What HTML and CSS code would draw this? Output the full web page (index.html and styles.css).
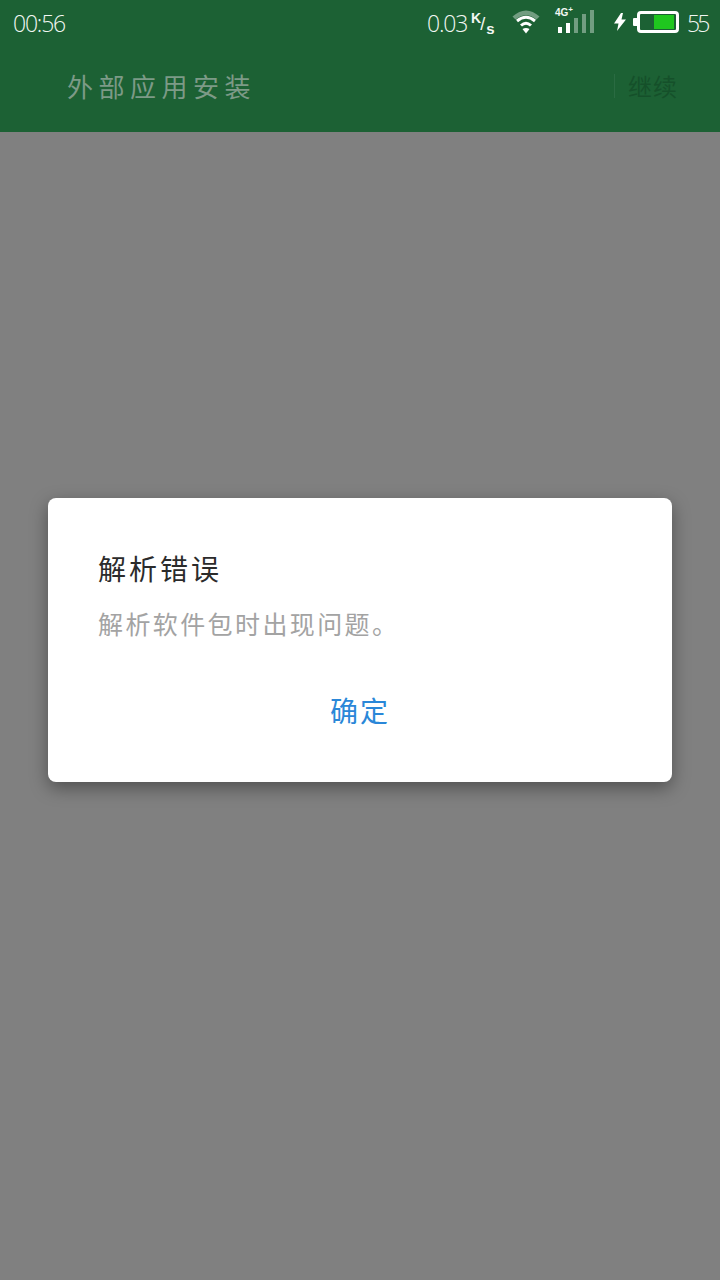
FILE: index.html
```html
<!DOCTYPE html>
<html lang="zh-CN">
<head>
<meta charset="utf-8">
<title>外部应用安装</title>
<link rel="stylesheet" href="styles.css">
</head>
<body>
<div class="screen">
  <header class="appbar">
    <div class="status">
      <span class="clock">00:56</span>
      <div class="status-right">
        <span class="speed">0.03</span>
        <span class="unit"><span class="unit-k">K</span><span class="unit-slash">/</span><span class="unit-s">s</span></span>
        <svg class="wifi" width="30" height="26" viewBox="0 0 30 26">
          <path d="M1.5 8.5 Q15 -3.5 28.500 8.500 L25.500 11.500 Q15 3 4.500 11.500Z" fill="#fff" fill-opacity=".38"/>
          <path d="M6 13 Q15 5.500 24 13" fill="none" stroke="#fff" stroke-width="3"/>
          <path d="M10 17.500 Q15 13 20 17.500" fill="none" stroke="#fff" stroke-width="3"/>
          <path d="M11.500 21 L15 25.500 L18.500 21 Q15 18.800 11.500 21Z" fill="#fff"/>
        </svg>
        <div class="signal">
          <span class="net">4G<sup class="net-plus">+</sup></span>
          <div class="bars">
            <i class="bar bar-1"></i><i class="bar bar-2"></i><i class="bar bar-3 dim"></i><i class="bar bar-4 dim"></i><i class="bar bar-5 dim"></i>
          </div>
        </div>
        <svg class="bolt" width="12" height="18" viewBox="0 0 12 18">
          <path d="M7 0 L0 10.500 H4.500 L3 18 L12 6.500 H7.500 L9 0 Z" fill="#fff"/>
        </svg>
        <div class="battery">
          <i class="battery-tip"></i>
          <div class="battery-body"><i class="battery-fill"></i></div>
        </div>
        <span class="level">55</span>
      </div>
    </div>
    <div class="toolbar">
      <h1 class="title">外部应用安装</h1>
      <span class="action">继续</span>
    </div>
  </header>
  <div class="overlay">
    <div class="dialog">
      <h2 class="dialog-title">解析错误</h2>
      <p class="dialog-text">解析软件包时出现问题。</p>
      <div class="dialog-actions"><span class="dialog-button">确定</span></div>
    </div>
  </div>
</div>
</body>
</html>
```
FILE: styles.css
```css
* { box-sizing: border-box; }
html, body { margin: 0; padding: 0; }
body {
  width: 720px;
  height: 1280px;
  overflow: hidden;
  background: #808080;
  font-family: "Noto Sans CJK SC", "Noto Sans", sans-serif;
}
.screen { position: relative; width: 720px; height: 1280px; }
.appbar { height: 132px; background: #1c6134; display: flex; flex-direction: column; }
.status {
  height: 46px;
  padding: 0 14px 0 13px;
  display: flex;
  align-items: center;
  justify-content: space-between;
  color: #f2f7f3;
  font-family: "Open Sans", Roboto, sans-serif;
  font-weight: 300;
}
.clock { font-size: 23px; letter-spacing: -1.2px; }
.status-right { display: flex; align-items: center; }
.speed { font-size: 23px; letter-spacing: -1.2px; width: 41px; }
.unit { display: flex; width: 24px; height: 26px; margin-left: 3px; margin-top: -2px; font-family: "Liberation Sans", sans-serif; font-weight: 700; }
.unit-k { font-size: 14px; line-height: 18px; }
.unit-slash { font-size: 18px; line-height: 30px; font-weight: 400; margin-left: -1px; margin-right: 1px; }
.unit-s { font-size: 15px; line-height: 39px; }
.wifi { margin-left: 16px; margin-bottom: 4px; }
.signal { position: relative; width: 40px; height: 26px; margin-left: 13px; margin-bottom: 4px; }
.net { position: absolute; left: 1px; top: -1px; font: 700 10px/12px "Liberation Sans", sans-serif; }
.net-plus { font-size: 8px; line-height: 0; }
.bars { height: 24px; margin-top: 1px; display: flex; align-items: flex-end; gap: 4px; padding-left: 4px; }
.bar { width: 4px; background: #fff; display: block; flex: none; }
.dim { background: rgba(255,255,255,.38); }
.bar-1 { height: 6px; }
.bar-2 { height: 10px; }
.bar-3 { height: 15px; }
.bar-4 { height: 19px; }
.bar-5 { height: 23px; }
.bolt { margin-left: 20px; margin-bottom: 2px; }
.battery { display: flex; align-items: center; margin-left: 7px; margin-bottom: 2px; }
.battery-tip { width: 4px; height: 8px; background: #fff; display: block; border-radius: 1px 0 0 1px; }
.battery-body { width: 42px; height: 22px; border: 3px solid #fff; border-radius: 4px; padding: 1px 2px; display: flex; justify-content: flex-end; }
.battery-fill { width: 20px; background: #1fc71f; display: block; }
.level { font-size: 23px; letter-spacing: -2.8px; width: 19px; margin-left: 8px; }
.toolbar {
  flex: 1;
  padding: 0 42px 0 67px;
  display: flex;
  align-items: center;
  justify-content: space-between;
}
.title { margin: 0 0 6px; font-size: 26px; font-weight: 400; letter-spacing: 5.5px; color: #7d9a87; line-height: 36px; }
.action {
  margin-bottom: 6px;
  padding-left: 13px;
  font-size: 24px;
  font-weight: 400;
  color: #15502a;
  line-height: 24px;
  border-left: 1px solid #2a6b42;
  letter-spacing: 1px;
}
.overlay { position: absolute; inset: 0; display: flex; align-items: center; justify-content: center; }
.dialog {
  width: 624px;
  height: 284px;
  background: #fff;
  border-radius: 8px;
  box-shadow: 0 6px 18px rgba(0,0,0,.38);
  padding: 49px 50px 0;
  display: flex;
  flex-direction: column;
}
.dialog-title { margin: 0; font-size: 28px; font-weight: 400; line-height: 42px; color: #2b2b2b; letter-spacing: 3px; }
.dialog-text { margin: 19px 0 0; font-size: 25px; font-weight: 400; line-height: 30px; color: #a3a3a3; letter-spacing: 2.4px; }
.dialog-actions { margin-top: 52px; display: flex; justify-content: center; margin-left: -50px; margin-right: -50px; }
.dialog-button { font-size: 28px; font-weight: 400; line-height: 40px; color: #2a87d8; letter-spacing: 2px; }
```
